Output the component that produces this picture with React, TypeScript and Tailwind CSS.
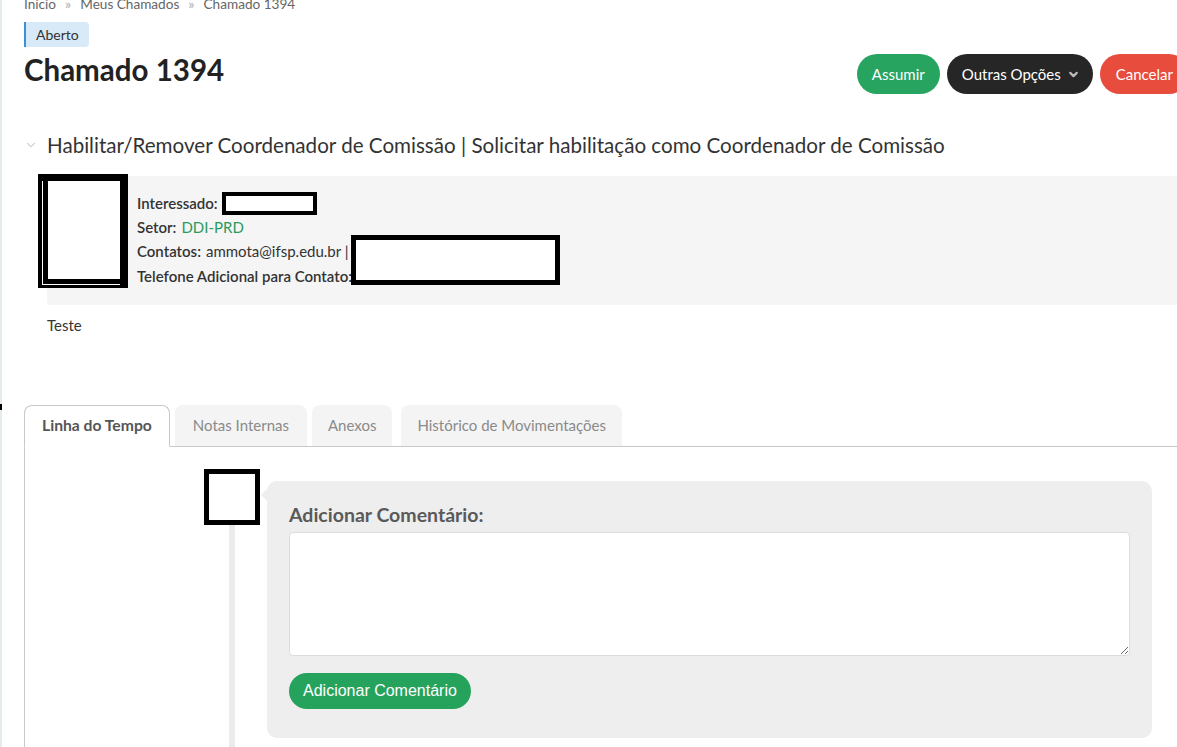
import { ChevronDown } from "lucide-react";

const font = { fontFamily: "Lato, 'Noto Sans', sans-serif" };

const Redacted = ({ className }: { className: string }) => (
  <span className={`inline-block bg-white border-black ${className}`} />
);

const Tab = ({ label, active, className = "" }: { label: string; active?: boolean; className?: string }) =>
  active ? (
    <div className="h-[42px] px-[17px] flex items-center rounded-t-[8px] border border-[#c8c8c8] border-b-white bg-white text-[15.7px] font-bold text-[#555] -mb-px relative">
      {label}
    </div>
  ) : (
    <div className={`h-[41px] flex items-center rounded-t-[8px] bg-[#f4f4f4] text-[15px] text-[#8a8a8a] mt-px ${className}`}>
      {label}
    </div>
  );

export default function App() {
  return (
    <div className="w-[1177px] h-[747px] overflow-hidden bg-white text-[#333] relative" style={font}>
      <div className="absolute left-0 top-0 w-[2px] h-full bg-[#e4ecee]" />
      <div className="absolute left-0 top-[404px] w-[2px] h-[6px] bg-black" />

      <div className="w-[1165px] ml-[24px]">
        <div className="flex items-center gap-[9px] text-[13.6px] text-[#666] -mt-[6px] h-[20px]">
          <span>Início</span>
          <span className="text-[#bbb] font-bold">»</span>
          <span>Meus Chamados</span>
          <span className="text-[#bbb] font-bold">»</span>
          <span>Chamado 1394</span>
        </div>

        <div className="flex justify-between items-start mt-[8px]">
          <div>
            <span className="inline-flex h-[25px] items-center px-[10px] bg-[#d8e9f7] border-l-2 border-[#3b8fdb] rounded-r-[4px] text-[14px] text-[#333]">
              Aberto
            </span>
            <h1 className="text-[29.5px] font-bold text-[#222] leading-[34px] mt-[6px]">Chamado 1394</h1>
          </div>
          <div className="flex gap-[7px] mt-[32px] text-[15px] text-white">
            <button className="h-[40px] px-[15px] rounded-full bg-[#27a45f]">Assumir</button>
            <button className="h-[40px] pl-[15px] pr-[13px] rounded-full bg-[#262626] flex items-center gap-[6px]">
              Outras Opções
              <ChevronDown size={13} strokeWidth={4} className="text-[#bbb]" />
            </button>
            <button className="h-[40px] px-[16px] rounded-full bg-[#e84c3d]">Cancelar</button>
          </div>
        </div>

        <div className="flex items-center mt-[38px] h-[26px]">
          <ChevronDown size={14} strokeWidth={1.5} className="text-[#aaa] mr-[9px]" />
          <span className="text-[20.6px] text-[#333]">
            Habilitar/Remover Coordenador de Comissão | Solicitar habilitação como Coordenador de Comissão
          </span>
        </div>

        <div className="ml-[23px] mt-[18px] h-[129px] bg-[#f5f5f5] rounded-l-[4px] flex">
          <div className="ml-[-9px] mt-[-2px] w-[90px] h-[114px] bg-black pt-[7px] pr-[8px] pb-[3px] pl-[4px] shrink-0">
            <div className="w-full h-full border-l border-b border-white pl-[5px] pb-[5px]">
              <div className="w-full h-full bg-white" />
            </div>
          </div>
          <div className="ml-[9px] pt-[15px] text-[15px] leading-[24px] text-[#333]">
            <div className="flex items-center gap-[4px]">
              <b className="font-semibold">Interessado:</b>
              <Redacted className="w-[95px] h-[23px] border-[4px]" />
            </div>
            <div className="flex gap-[5px]">
              <b className="font-semibold">Setor:</b>
              <span className="text-[#2a9a5a]">DDI-PRD</span>
            </div>
            <div className="flex items-start gap-[5px] h-[24px]">
              <b className="font-semibold">Contatos:</b>
              <span>ammota@ifsp.edu.br |</span>
              <Redacted className="w-[209px] h-[50px] border-[5px] mt-[-4px] ml-[-3px] relative z-10" />
            </div>
            <div className="mt-[1px]">
              <b className="font-semibold">Telefone Adicional para Contato:</b>
            </div>
          </div>
        </div>

        <p className="ml-[23px] mt-[9px] text-[15px] text-[#333]">Teste</p>

        <div className="mt-[67px] flex gap-[5px] items-end border-b border-[#c8c8c8]">
          <Tab label="Linha do Tempo" active />
          <Tab label="Notas Internas" className="px-[18px]" />
          <Tab label="Anexos" className="px-[16px]" />
          <Tab label="Histórico de Movimentações" className="px-[16px] ml-[4px]" />
        </div>

        <div className="border-l border-[#c8c8c8] h-[320px] pt-[22px] pl-[179px] flex">
          <div className="w-[56px] flex flex-col items-center shrink-0">
            <div className="w-[56px] h-[56px] border-[5px] border-black bg-white" />
            <div className="w-[6px] flex-1 bg-[#ebebeb]" />
          </div>
          <div className="relative ml-[7px] mt-[12px] w-[885px] h-[257px] bg-[#eeeeee] rounded-[10px] px-[22px] pt-[22px]">
            <div className="absolute left-[-6px] top-[8px] w-0 h-0 border-y-[6px] border-y-transparent border-r-[6px] border-r-[#eeeeee]" />
            <h3 className="text-[19.5px] font-bold text-[#5a5a5a] leading-[24px]">Adicionar Comentário:</h3>
            <textarea className="mt-[5px] w-[841px] h-[124px] bg-white border border-[#dcdcdc] rounded-[4px] block" />
            <button
              className="mt-[17px] h-[36px] px-[14px] rounded-full bg-[#25a35d] text-white text-[16px]"
              style={{ fontFamily: "'Liberation Sans', Arial, sans-serif" }}
            >
              Adicionar Comentário
            </button>
          </div>
        </div>
      </div>
    </div>
  );
}
